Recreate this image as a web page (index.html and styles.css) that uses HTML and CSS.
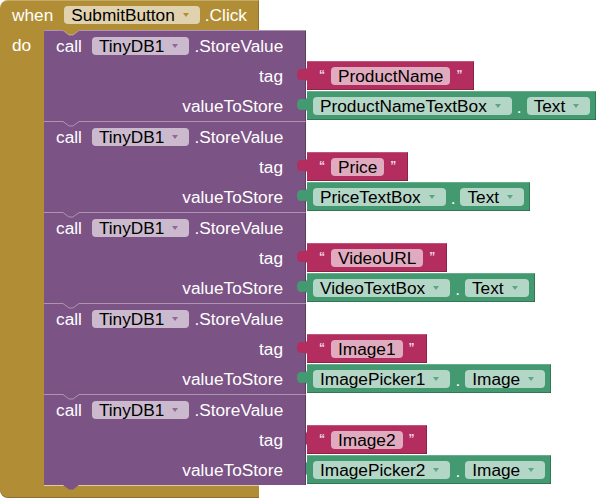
FILE: index.html
```html
<!DOCTYPE html>
<html>
<head>
<meta charset="utf-8">
<link rel="stylesheet" href="styles.css">
</head>
<body>
<div class="event">
  <div class="ev-head">
    <span class="lbl">when</span>
    <span class="chip chip-gold m-when">SubmitButton<i class="arr"></i></span>
    <span class="lbl m-click">.Click</span>
  </div>
  <div class="ev-mid">
    <div class="arm"><span class="lbl do">do</span></div>
    <div class="stack">

      <div class="call">
        <div class="call-body">
          <svg class="notch" width="262" height="6"><path class="nf first" d="M19,0 L25,5 L29,5 L35,0 Z"/><path class="nl" d="M0,0.5 H19 L25,5 H29 L35,0.5 H262"/></svg>
          <div class="row head"><span class="lbl">call</span><span class="chip chip-purple m-call">TinyDB1<i class="arr"></i></span><span class="lbl m-sv">.StoreValue</span></div>
          <div class="row right"><span class="lbl">tag</span></div>
          <div class="row right"><span class="lbl">valueToStore</span></div>
        </div>
        <div class="inputs">
          <div class="val str"><svg class="tab" width="10" height="15"><path d="M10,0 C10,3 7,2 4,2 C1,2 0,4.5 0,7.5 C0,10.5 1,13 4,13 C7,13 10,12 10,15 Z"/></svg><span class="q">“</span><span class="chip chip-red">ProductName</span><span class="q">”</span></div>
          <div class="val get"><svg class="tab" width="10" height="15"><path d="M10,0 C10,3 7,2 4,2 C1,2 0,4.5 0,7.5 C0,10.5 1,13 4,13 C7,13 10,12 10,15 Z"/></svg><span class="chip chip-green">ProductNameTextBox<i class="arr"></i></span><span class="dot">.</span><span class="chip chip-green">Text<i class="arr"></i></span></div>
        </div>
      </div>

      <div class="call">
        <div class="call-body">
          <svg class="notch" width="262" height="6"><path class="nl" d="M0,0.5 H19 L25,5 H29 L35,0.5 H262"/></svg>
          <div class="row head"><span class="lbl">call</span><span class="chip chip-purple m-call">TinyDB1<i class="arr"></i></span><span class="lbl m-sv">.StoreValue</span></div>
          <div class="row right"><span class="lbl">tag</span></div>
          <div class="row right"><span class="lbl">valueToStore</span></div>
        </div>
        <div class="inputs">
          <div class="val str"><svg class="tab" width="10" height="15"><path d="M10,0 C10,3 7,2 4,2 C1,2 0,4.5 0,7.5 C0,10.5 1,13 4,13 C7,13 10,12 10,15 Z"/></svg><span class="q">“</span><span class="chip chip-red">Price</span><span class="q">”</span></div>
          <div class="val get"><svg class="tab" width="10" height="15"><path d="M10,0 C10,3 7,2 4,2 C1,2 0,4.5 0,7.5 C0,10.5 1,13 4,13 C7,13 10,12 10,15 Z"/></svg><span class="chip chip-green">PriceTextBox<i class="arr"></i></span><span class="dot">.</span><span class="chip chip-green">Text<i class="arr"></i></span></div>
        </div>
      </div>

      <div class="call">
        <div class="call-body">
          <svg class="notch" width="262" height="6"><path class="nl" d="M0,0.5 H19 L25,5 H29 L35,0.5 H262"/></svg>
          <div class="row head"><span class="lbl">call</span><span class="chip chip-purple m-call">TinyDB1<i class="arr"></i></span><span class="lbl m-sv">.StoreValue</span></div>
          <div class="row right"><span class="lbl">tag</span></div>
          <div class="row right"><span class="lbl">valueToStore</span></div>
        </div>
        <div class="inputs">
          <div class="val str"><svg class="tab" width="10" height="15"><path d="M10,0 C10,3 7,2 4,2 C1,2 0,4.5 0,7.5 C0,10.5 1,13 4,13 C7,13 10,12 10,15 Z"/></svg><span class="q">“</span><span class="chip chip-red">VideoURL</span><span class="q">”</span></div>
          <div class="val get"><svg class="tab" width="10" height="15"><path d="M10,0 C10,3 7,2 4,2 C1,2 0,4.5 0,7.5 C0,10.5 1,13 4,13 C7,13 10,12 10,15 Z"/></svg><span class="chip chip-green">VideoTextBox<i class="arr"></i></span><span class="dot">.</span><span class="chip chip-green">Text<i class="arr"></i></span></div>
        </div>
      </div>

      <div class="call">
        <div class="call-body">
          <svg class="notch" width="262" height="6"><path class="nl" d="M0,0.5 H19 L25,5 H29 L35,0.5 H262"/></svg>
          <div class="row head"><span class="lbl">call</span><span class="chip chip-purple m-call">TinyDB1<i class="arr"></i></span><span class="lbl m-sv">.StoreValue</span></div>
          <div class="row right"><span class="lbl">tag</span></div>
          <div class="row right"><span class="lbl">valueToStore</span></div>
        </div>
        <div class="inputs">
          <div class="val str"><svg class="tab" width="10" height="15"><path d="M10,0 C10,3 7,2 4,2 C1,2 0,4.5 0,7.5 C0,10.5 1,13 4,13 C7,13 10,12 10,15 Z"/></svg><span class="q">“</span><span class="chip chip-red">Image1</span><span class="q">”</span></div>
          <div class="val get"><svg class="tab" width="10" height="15"><path d="M10,0 C10,3 7,2 4,2 C1,2 0,4.5 0,7.5 C0,10.5 1,13 4,13 C7,13 10,12 10,15 Z"/></svg><span class="chip chip-green">ImagePicker1<i class="arr"></i></span><span class="dot">.</span><span class="chip chip-green">Image<i class="arr"></i></span></div>
        </div>
      </div>

      <div class="call last">
        <div class="call-body">
          <svg class="notch" width="262" height="6"><path class="nl" d="M0,0.5 H19 L25,5 H29 L35,0.5 H262"/></svg>
          <div class="row head"><span class="lbl">call</span><span class="chip chip-purple m-call">TinyDB1<i class="arr"></i></span><span class="lbl m-sv">.StoreValue</span></div>
          <div class="row right"><span class="lbl">tag</span></div>
          <div class="row right"><span class="lbl">valueToStore</span></div>
          <svg class="next" width="262" height="6"><path d="M19,0 L25,4.5 L29,4.5 L35,0 Z"/></svg>
        </div>
        <div class="inputs">
          <div class="val str"><svg class="tab" width="10" height="15"><path d="M10,0 C10,3 7,2 4,2 C1,2 0,4.5 0,7.5 C0,10.5 1,13 4,13 C7,13 10,12 10,15 Z"/></svg><span class="q">“</span><span class="chip chip-red">Image2</span><span class="q">”</span></div>
          <div class="val get"><svg class="tab" width="10" height="15"><path d="M10,0 C10,3 7,2 4,2 C1,2 0,4.5 0,7.5 C0,10.5 1,13 4,13 C7,13 10,12 10,15 Z"/></svg><span class="chip chip-green">ImagePicker2<i class="arr"></i></span><span class="dot">.</span><span class="chip chip-green">Image<i class="arr"></i></span></div>
        </div>
      </div>

    </div>
  </div>
  <div class="ev-foot"></div>
</div>
</body>
</html>
```

FILE: styles.css
```css
* { box-sizing: border-box; }
html, body { margin: 0; padding: 0; background: #ffffff; }
body {
  font-family: "Liberation Sans", Arial, sans-serif;
  font-size: 17.25px;
  color: #ffffff;
}
.event { width: 596px; height: 500px; overflow: hidden; }
.lbl { white-space: nowrap; line-height: 20px; }

.ev-head {
  width: 259px;
  height: 30px;
  background: #b18e35;
  border-top-left-radius: 8px;
  display: flex;
  align-items: center;
  padding-left: 12px;
  box-shadow: inset 0 1px 0 rgba(255,255,255,0.25), inset -1px 0 0 rgba(0,0,0,0.18);
}
.m-when { margin-left: 11px; }
.m-click { margin-left: 5px; }

.ev-mid { display: flex; }
.arm {
  width: 44px;
  flex: none;
  background: #b18e35;
  padding-left: 12px;
  padding-top: 5px;
}
.stack { display: flex; flex-direction: column; width: 552px; }

.call { display: flex; height: 91px; flex: none; }
.call-body {
  position: relative;
  width: 262px;
  flex: none;
  background: #7c5385;
  display: flex;
  flex-direction: column;
  box-shadow: inset -1px 0 0 rgba(0,0,0,0.25);
}
.notch { position: absolute; left: 0; top: 0; }
.notch .nf { fill: #b18e35; }
.notch .nl { fill: none; stroke: rgba(255,255,255,0.38); stroke-width: 1; }
.next { position: absolute; left: 0; top: 100%; z-index: 2; }
.next path { fill: #7c5385; }
.last .call-body { box-shadow: inset -1px 0 0 rgba(0,0,0,0.25), 0 1px 0 rgba(255,255,255,0.55); z-index: 1; }

.row { display: flex; align-items: center; height: 30px; }
.row.head { height: 31px; padding-left: 12px; padding-top: 0; }
.row.right { justify-content: flex-end; padding-right: 23px; }
.m-call { margin-left: 10px; }
.m-sv { margin-left: 5px; }

.inputs {
  display: flex;
  flex-direction: column;
  align-items: flex-start;
  padding-top: 31px;
}
.val {
  position: relative;
  height: 29px;
  margin: 0 0 1px 1px;
  display: flex;
  align-items: center;
  white-space: nowrap;
  box-shadow: inset 0 1px 0 rgba(255,255,255,0.2), inset 0 -1px 0 rgba(0,0,0,0.22), inset -1px 0 0 rgba(0,0,0,0.22);
}
.tab { position: absolute; left: -10px; top: 6px; }
.str { background: #b32d5e; padding: 0 12px 0 12px; }
.str .tab path { fill: #b32d5e; }
.get { background: #439970; padding: 0 6px; }
.get .tab path { fill: #439970; }

.q {
  font-size: 12px;
  font-weight: bold;
  line-height: 12px;
  align-self: flex-start;
  margin-top: 8px;
  color: #f2dde6;
}
.str .chip { margin: 0 6px; padding: 0 7px; }
.dot { margin: 0 5px; line-height: 20px; padding-top: 3px; }

.chip {
  display: inline-flex;
  align-items: center;
  height: 18px;
  border-radius: 4px;
  padding: 0 9px 0 7px;
  color: #000000;
  line-height: 18px;
  white-space: nowrap;
}
.chip .arr {
  display: inline-block;
  width: 0;
  height: 0;
  border-left: 3.5px solid transparent;
  border-right: 3.5px solid transparent;
  border-top: 4px solid currentColor;
  margin-left: 8px;
  margin-right: 2px;
}
.chip-gold { background: #e0d2ae; }
.chip-gold .arr { border-top-color: #b18e35; }
.chip-purple { background: #cbbace; }
.chip-purple .arr { border-top-color: #8e6a97; }
.chip-red { background: #e1abbf; }
.chip-green { background: #b4d6c6; }
.chip-green .arr { border-top-color: #5aa882; }

.ev-foot {
  width: 259px;
  height: 12px;
  background: #b18e35;
  border-bottom-left-radius: 8px;
  box-shadow: 0 1px 0 #8d7029;
}
```
